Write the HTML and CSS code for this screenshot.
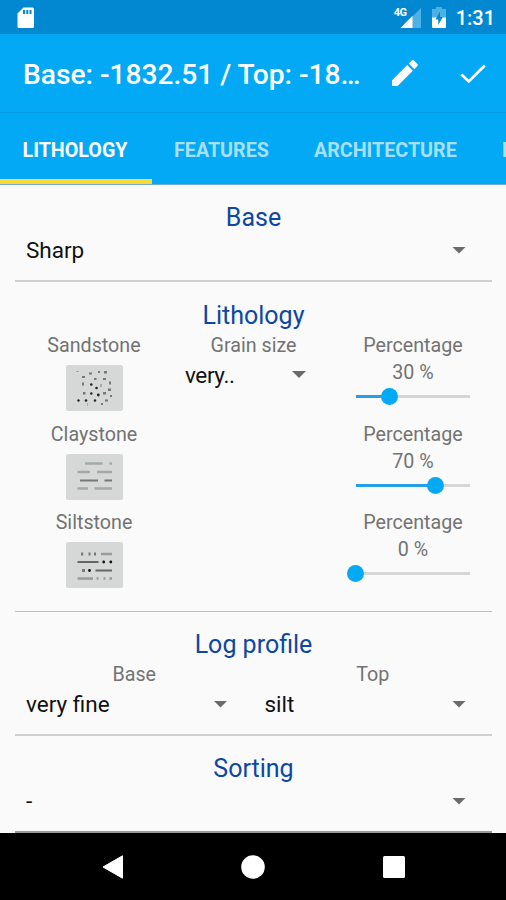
FILE: index.html
```html
<!DOCTYPE html>
<html lang="en">
<head>
<meta charset="utf-8">
<title>Lithology</title>
<link rel="stylesheet" href="styles.css">
</head>
<body>
<div class="screen">
  <header class="status">
    <svg class="sd" width="18" height="22" viewBox="0 0 18 22"><path fill="#fff" d="M6.500 .5H15.500Q17 .5 17 2V19.500Q17 21 15.500 21H2Q.5 21 .5 19.500V6.500Z"/><path fill="#0288d1" d="M6 3h2v4H6zM9.300 3h2v4h-2zM12.500 3h2v4h-2z"/></svg>
    <div class="signal"><span class="net">4G</span><svg width="22" height="21" viewBox="0 0 22 21"><path fill="#4fb0e3" d="M22 0V20H2Z"/><path fill="#fff" d="M13.500 7.800V20H1.500Z"/></svg></div>
    <svg class="battery" width="14" height="21" viewBox="0 0 14 21"><path fill="#4fb0e3" d="M4 0h6v2h4v9H0V2h4z"/><path fill="#fff" d="M0 10.500h14V20q0 1-1 1H1q-1 0-1-1z"/><path fill="#0288d1" d="M8 4.500 3.500 12.500H6.300V18L10.800 10H8z"/></svg>
    <span class="clock">1:31</span>
  </header>
  <div class="toolbar">
    <h1 class="title">Base: -1832.51 / Top: -18…</h1>
    <svg class="edit" width="28" height="28" viewBox="0 0 28 28"><path fill="#fff" d="M1 21.300 16.200 6.100l5.600 5.600L6.600 26.900H1zM17.700 4.600 20.800 1.500q1.100-1 2.200 0l3.400 3.400q1 1.100 0 2.200l-3.100 3.100z"/></svg>
    <svg class="check" width="26" height="20" viewBox="0 0 26 20"><path fill="none" stroke="#fff" stroke-width="2.800" d="M1.400 10.500 8.800 17.400 24.700 1.600"/></svg>
  </div>
  <nav class="tabs">
    <span class="tab active">LITHOLOGY</span><span class="tab features">FEATURES</span><span class="tab arch">ARCHITECTURE</span><span class="tab next">INTERPRETATION</span>
  </nav>
  <main>
    <section class="base">
      <h2>Base</h2>
      <div class="spinner"><span>Sharp</span><i class="arrow"></i></div>
    </section>
    <section class="lithology">
      <h2>Lithology</h2>
      <div class="row">
        <div class="rock"><span class="label">Sandstone</span>
          <svg class="swatch" width="57" height="46" viewBox="0 0 57 46"><rect width="57" height="46" rx="2" fill="#d6d8d7"/><g fill="#777"><path d="M23 7.500h3v2h-3zM32 6h2v2h-2zM38 6h3v2.500h-3zM16 11h3v2h-3zM28 13h2.500v2H28zM37 13h3v2h-3zM16 17.500h2v3h-2zM43 16.500h2v3h-2zM17 27h2.500v2.500H17zM37 27h3v2.500h-3zM42 23.500h3v2.500h-3zM44 30h2v2h-2zM39 34.500h3v2h-3zM35 38h2v2h-2z"/></g><g fill="#222"><circle cx="25.300" cy="19.500" r="1.300"/><circle cx="30.500" cy="23" r="1.300"/><circle cx="32.300" cy="30" r="1.400"/><circle cx="25.300" cy="28.500" r="1.200"/><circle cx="12.500" cy="35.500" r="1.200"/><circle cx="20" cy="35.500" r="1.300"/><circle cx="29" cy="35.500" r="1.200"/></g><path fill="#aaa" d="M34 19h2v3h-2zM10 6h3v1h-3zM21 38h1v3h-1z"/></svg>
        </div>
        <div class="grain"><span class="label">Grain size</span><div class="spinner"><span>very..</span><i class="arrow"></i></div></div>
        <div class="pct"><span class="label">Percentage</span><span class="label">30 %</span><div class="slider"><i class="fill" style="width:30%"></i><i class="thumb" style="left:30%"></i></div></div>
      </div>
      <div class="row">
        <div class="rock"><span class="label">Claystone</span>
          <svg class="swatch" width="57" height="46" viewBox="0 0 57 46"><rect width="57" height="46" rx="2" fill="#d6d8d7"/><path stroke="#a6a8a7" stroke-width="2.500" d="M19 9.500h17.500M43.500 9.500h2.500M11.500 18h12.500M31 18h15M11.500 34.500h10.500M28.500 34.500h17.500"/><path stroke="#777" stroke-width="2" d="M14 26.500h18M38.500 26.500h7.500"/></svg>
        </div>
        <div class="grain"></div>
        <div class="pct"><span class="label">Percentage</span><span class="label">70 %</span><div class="slider"><i class="fill" style="width:70%"></i><i class="thumb" style="left:70%"></i></div></div>
      </div>
      <div class="row">
        <div class="rock"><span class="label">Siltstone</span>
          <svg class="swatch" width="57" height="46" viewBox="0 0 57 46"><rect width="57" height="46" rx="2" fill="#d6d8d7"/><path stroke="#999b9a" stroke-width="2.500" d="M35 12h11M11.500 36.500h15.500M30.500 36.500h2M37.500 36.500h2M43.500 36.500h2.500"/><path stroke="#777" stroke-width="3" d="M15 12h2.200M22.500 12h2M28 12h2M16 28.500h3"/><path stroke="#666" stroke-width="2" d="M11.500 20h21M29.500 28.500H46"/><g fill="#111"><circle cx="37.700" cy="20" r="1.400"/><circle cx="44.800" cy="20" r="1.400"/><circle cx="23.500" cy="28.500" r="1.400"/></g></svg>
        </div>
        <div class="grain"></div>
        <div class="pct"><span class="label">Percentage</span><span class="label">0 %</span><div class="slider"><i class="fill" style="width:0%"></i><i class="thumb" style="left:0%"></i></div></div>
      </div>
    </section>
    <section class="profile">
      <h2>Log profile</h2>
      <div class="halves">
        <div><span class="label">Base</span><div class="spinner"><span>very fine</span><i class="arrow"></i></div></div>
        <div><span class="label">Top</span><div class="spinner"><span>silt</span><i class="arrow"></i></div></div>
      </div>
    </section>
    <section class="sorting">
      <h2>Sorting</h2>
      <div class="spinner"><span>-</span><i class="arrow"></i></div>
    </section>
  </main>
  <footer class="navbar">
    <svg width="22" height="24" viewBox="0 0 22 24"><path fill="#fff" stroke="#fff" stroke-linejoin="round" d="M1 12 20.500 .8V23.200Z"/></svg>
    <svg width="24" height="24" viewBox="0 0 24 24"><circle cx="12" cy="12" r="11.800" fill="#fff"/></svg>
    <svg width="22" height="22" viewBox="0 0 22 22"><rect width="22" height="22" rx="1.500" fill="#fff"/></svg>
  </footer>
</div>
</body>
</html>
```

FILE: styles.css
```css
* { box-sizing: border-box; }
body { margin: 0; font-family: Roboto, "Liberation Sans", sans-serif; }
svg { display: block; flex: none; }
h1, h2 { margin: 0; }
.screen { width: 506px; height: 900px; overflow: hidden; display: flex; flex-direction: column; background: #fafafa; }

.status { height: 34px; flex: none; background: #0288d1; display: flex; align-items: flex-start; padding-right: 11px; }
.sd { margin: 7px auto 0 17px; }
.signal { position: relative; margin: 8px 11px 0 0; }
.net { position: absolute; left: -5px; top: 0; font-size: 11px; line-height: 9px; font-weight: 700; color: #fff; letter-spacing: -.5px; }
.battery { margin: 7px 10px 0 0; }
.clock { font-size: 20px; line-height: 34px; padding-top: 1px; height: 34px; font-weight: 500; color: #fff; }

.toolbar { height: 78px; flex: none; background: #03a9f4; display: flex; align-items: center; padding: 3px 20px 0 23px; }
.title { flex: 1; font-size: 28.150px; font-weight: 500; line-height: 34px; padding-top: 1px; color: #fff; white-space: nowrap; }
.edit { margin: -3px 41px 0 0; }
.check { margin-top: -1px; }

.tabs { height: 73px; flex: none; background: #03a9f4; border-top: 1px solid #049de4; border-bottom: 1px solid #72aecb; display: flex; white-space: nowrap; overflow: hidden; }
.tab { flex: none; padding: 0 22.5px; font-size: 19.700px; line-height: 75px; font-weight: 700; color: #a8e0fb; }
.tab.active { width: 151.5px; color: #fff; border-bottom: 5px solid #fdd835; }

main { flex: none; height: 648px; }
section { margin: 0 14px 0 15px; border-bottom: 2px solid #d0d0d0; }
h2 { font-size: 25px; line-height: 29px; font-weight: 400; color: #0d47a1; text-align: center; }
.label { display: block; font-size: 19.7px; line-height: 23px; color: #737373; text-align: center; white-space: nowrap; }
.spinner { display: flex; justify-content: space-between; align-items: center; height: 26px; padding: 0 26px 0 11px; font-size: 22.5px; line-height: 26px; color: #111; }
.arrow { width: 14px; height: 7px; background: #6b6b6b; clip-path: polygon(0 0, 100% 0, 50% 100%); }

.base { height: 97px; padding-top: 18px; }
.base .spinner { margin-top: 5px; }
.lithology { height: 330px; padding-top: 19px; border-bottom-color: #bdbdbd; border-bottom-width: 1.5px; }
.lithology h2 { margin-bottom: 4px; }
.row { display: grid; grid-template-columns: 158px 161px 158px; height: 88.5px; }
.swatch { margin: 8px auto 0 51px; }
.grain .spinner { margin-top: 4.500px; padding: 0 28px 0 12px; letter-spacing: -.4px; }
.pct .label + .label { margin-top: 4px; }
.slider { position: relative; height: 3px; width: 114px; margin: 11px 0 0 21.500px; background: #d6d6d6; }
.fill { display: block; height: 3px; background: #259fe8; }
.thumb { position: absolute; top: -7px; width: 17px; height: 17px; margin-left: -8.500px; border-radius: 50%; background: #03a9f4; }
.profile { height: 124px; padding-top: 18px; }
.profile .label { margin-top: 4px; }
.profile .spinner { margin-top: 5px; }
.halves { display: grid; grid-template-columns: 1fr 1fr; }
.sorting { height: 97px; padding-top: 18px; border-bottom-color: #999; }
.sorting .spinner { margin-top: 5px; }

.navbar { flex: 1; background: #000; display: flex; justify-content: center; align-items: center; gap: 117.500px; }
```
